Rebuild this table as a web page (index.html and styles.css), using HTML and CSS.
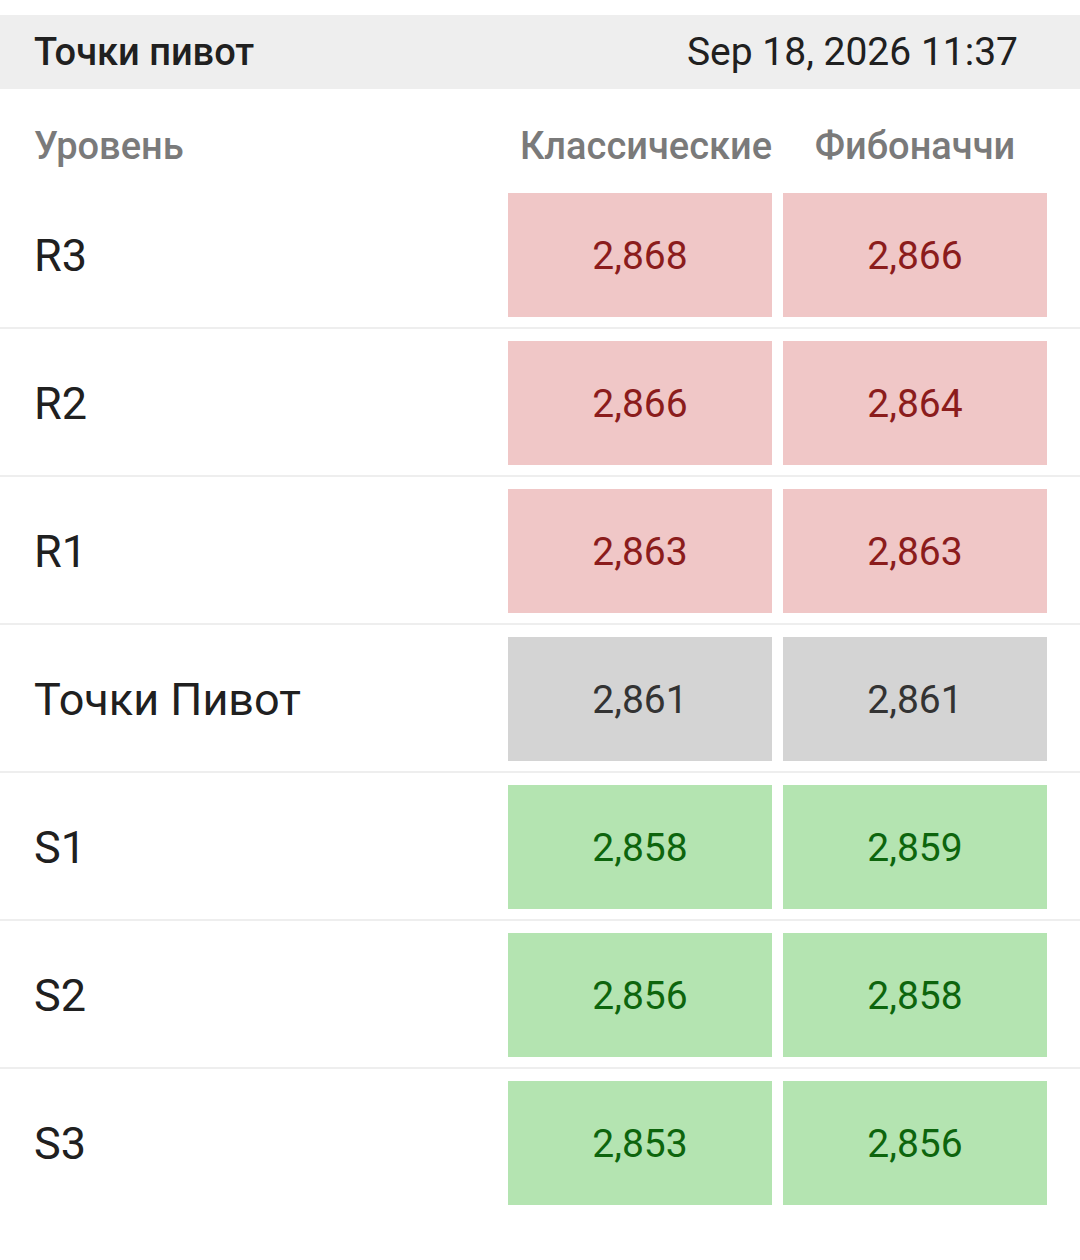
FILE: index.html
```html
<!DOCTYPE html>
<html lang="ru">
<head>
<meta charset="utf-8">
<link rel="stylesheet" href="styles.css">
</head>
<body>
<div class="page">
  <div class="topbar">
    <div class="title">Точки пивот</div>
    <div class="date">Sep 18, 2026 11:37</div>
  </div>
  <div class="table">
    <div class="row head">
      <div class="label">Уровень</div>
      <div class="colhead">Классические</div>
      <div class="colhead">Фибоначчи</div>
    </div>
    <div class="row">
      <div class="name">R3</div>
      <div class="cell res">2,868</div>
      <div class="cell res">2,866</div>
    </div>
    <div class="row">
      <div class="name">R2</div>
      <div class="cell res">2,866</div>
      <div class="cell res">2,864</div>
    </div>
    <div class="row">
      <div class="name">R1</div>
      <div class="cell res">2,863</div>
      <div class="cell res">2,863</div>
    </div>
    <div class="row">
      <div class="name">Точки Пивот</div>
      <div class="cell piv">2,861</div>
      <div class="cell piv">2,861</div>
    </div>
    <div class="row">
      <div class="name">S1</div>
      <div class="cell sup">2,858</div>
      <div class="cell sup">2,859</div>
    </div>
    <div class="row">
      <div class="name">S2</div>
      <div class="cell sup">2,856</div>
      <div class="cell sup">2,858</div>
    </div>
    <div class="row last">
      <div class="name">S3</div>
      <div class="cell sup">2,853</div>
      <div class="cell sup">2,856</div>
    </div>
  </div>
</div>
</body>
</html>
```

FILE: styles.css
```css
html, body {
  margin: 0;
  padding: 0;
  background: #ffffff;
}
body {
  font-family: Roboto, "Noto Sans", sans-serif;
  color: #222222;
}
.page {
  padding-top: 15px;
}
.topbar {
  height: 74px;
  background: #eeeeee;
  display: flex;
  align-items: center;
  justify-content: space-between;
  padding: 0 62px 0 34px;
}
.title {
  font-size: 38px;
  font-weight: 500;
  color: #202020;
}
.date {
  font-size: 39px;
  font-weight: 400;
  color: #202020;
}
.row {
  display: grid;
  grid-template-columns: 1fr 264px 264px;
  column-gap: 11px;
  padding: 12px 33px 10px 34px;
  border-bottom: 2px solid #eeeeee;
  align-items: center;
}
.row.head {
  height: 92px;
  box-sizing: border-box;
  padding-top: 32px;
  padding-bottom: 10px;
  border-bottom: none;
  align-items: center;
}
.row.last {
  border-bottom: none;
}
.label, .colhead {
  font-size: 38px;
  font-weight: 500;
  color: #7a7a7a;
}
.colhead {
  text-align: center;
  white-space: nowrap;
}
.colhead:nth-child(2) {
  margin-right: -12px;
}
.name {
  font-size: 45px;
  font-weight: 400;
  color: #202020;
}
.cell {
  height: 124px;
  display: flex;
  align-items: center;
  justify-content: center;
  font-size: 39px;
  font-weight: 400;
  padding-top: 2px;
  box-sizing: border-box;
}
.res {
  background: #f0c7c7;
  color: #8b1c1c;
}
.piv {
  background: #d4d4d4;
  color: #333333;
}
.sup {
  background: #b4e4b1;
  color: #0d650d;
}
```
